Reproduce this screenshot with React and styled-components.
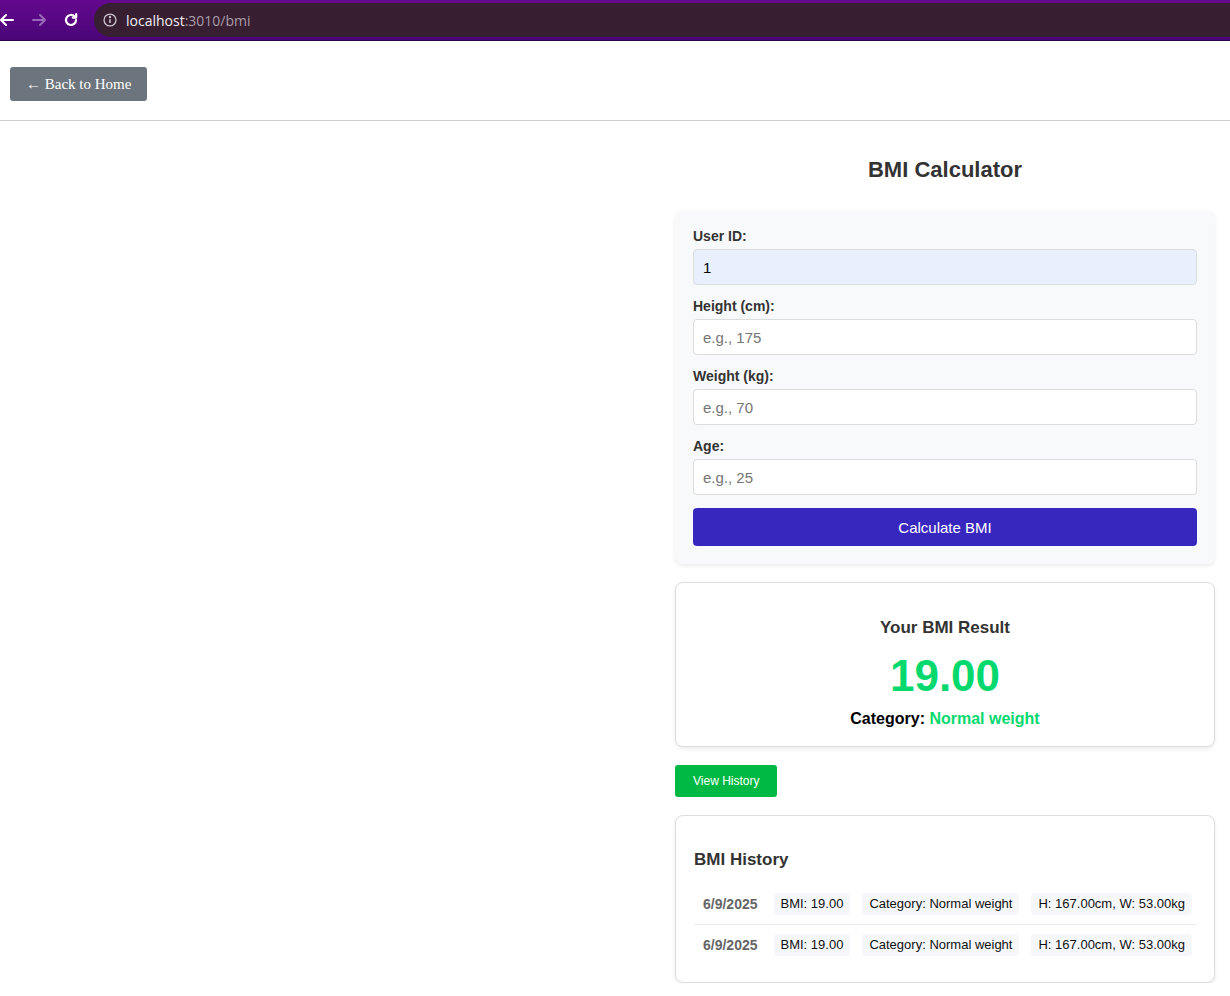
import React, { useState } from "react";
import styled, { createGlobalStyle } from "styled-components";

const GlobalStyle = createGlobalStyle`
  * {
    box-sizing: border-box;
  }
  body {
    margin: 0;
    background: #fff;
    font-family: "Liberation Sans", Arial, sans-serif;
  }
`;

//브라우저 상단 바 (스크린샷에 포함된 부분)
const BrowserBar = styled.div`
  height: 41px;
  display: flex;
  align-items: center;
  gap: 16px;
  background: linear-gradient(to bottom, #64098f, #4a0576);
  border-bottom: 1px solid #2e0248;
`;

const NavIcon = styled.div`
  width: 16px;
  height: 16px;
  display: flex;
  margin-left: ${(p) => (p.$first ? "-1px" : "0")};
`;

const UrlField = styled.div`
  flex: 1;
  height: 34px;
  margin-left: -1px;
  border-radius: 17px 0 0 17px;
  background: #371f31;
  display: flex;
  align-items: center;
  padding-left: 9px;
  gap: 9px;
  font-family: "Open Sans", "DejaVu Sans", sans-serif;
  font-size: 14px;
`;

const Host = styled.span`
  color: #f4eef4;
`;

const UrlRest = styled.span`
  color: #a99ba8;
`;

const Header = styled.div`
  padding: 26px 10px 19px;
  border-bottom: 1px solid #cfcfcf;
`;

const BackButton = styled.button`
  height: 34px;
  padding: 0 16px;
  border: none;
  border-radius: 3px;
  background: #6c757d;
  color: #fff;
  font-family: "Liberation Serif", "Times New Roman", serif;
  font-size: 15px;
  cursor: pointer;
`;

const Layout = styled.div`
  display: grid;
  grid-template-columns: 1fr 540px;
  padding-right: 15px;
`;

const Column = styled.div`
  padding-top: 36px;
`;

const Title = styled.h2`
  margin: 0 0 28px;
  text-align: center;
  font-size: 22px;
  line-height: 25px;
  font-weight: bold;
  color: #333;
`;

const FormCard = styled.form`
  background: #f8f9fa;
  border-radius: 8px;
  padding: 18px 18px 18px;
  box-shadow: 0 2px 4px rgba(0, 0, 0, 0.08);
`;

const Field = styled.div`
  margin-bottom: 13px;
`;

const Label = styled.label`
  display: block;
  font-size: 14px;
  line-height: 17px;
  font-weight: bold;
  color: #333;
  margin-bottom: 4px;
`;

const Input = styled.input`
  display: block;
  width: 100%;
  height: 36px;
  padding: 0 9px;
  border: 1px solid #dcdcdc;
  border-radius: 4px;
  background: ${(p) => (p.$filled ? "#e8f0fe" : "#fff")};
  font-family: "Liberation Sans", Arial, sans-serif;
  font-size: 15px;
  color: #000;
  outline: none;

  &::placeholder {
    color: #757575;
  }
`;

const SubmitButton = styled.button`
  display: block;
  width: 100%;
  height: 38px;
  border: none;
  border-radius: 4px;
  background: #3827be;
  color: #fff;
  font-family: "Liberation Sans", Arial, sans-serif;
  font-size: 15px;
  cursor: pointer;
`;

const Card = styled.div`
  margin-top: 18px;
  background: #fff;
  border: 1px solid #ddd;
  border-radius: 8px;
  box-shadow: 0 2px 4px rgba(0, 0, 0, 0.08);
`;

const ResultCard = styled(Card)`
  padding: 35px 20px 17px;
  text-align: center;
`;

const CardTitle = styled.h3`
  margin: 0;
  font-size: 17px;
  line-height: 20px;
  font-weight: bold;
  color: #333;
`;

const BmiValue = styled.div`
  margin-top: 13px;
  font-size: 44px;
  line-height: 50px;
  font-weight: bold;
  color: #05d96e;
`;

const CategoryLine = styled.div`
  margin-top: 8px;
  font-size: 16px;
  line-height: 20px;
  font-weight: bold;
  color: #000;
`;

const CategoryValue = styled.span`
  color: #05d96e;
`;

const HistoryButton = styled.button`
  display: block;
  margin-top: 18px;
  height: 32px;
  padding: 0 18px;
  border: none;
  border-radius: 3px;
  background: #00b944;
  color: #fff;
  font-family: "Liberation Sans", Arial, sans-serif;
  font-size: 12px;
  cursor: pointer;
`;

const HistoryCard = styled(Card)`
  padding: 34px 18px 17px;

  ${CardTitle} {
    margin-bottom: 14px;
  }
`;

const HistoryRow = styled.div`
  display: flex;
  align-items: center;
  gap: 12px;
  padding: 9px 9px;
  white-space: nowrap;
  border-top: ${(p) => (p.$first ? "none" : "1px solid #ececec")};
`;

const DateText = styled.span`
  margin-right: 4px;
  font-size: 14px;
  font-weight: bold;
  color: #666;
`;

const Chip = styled.span`
  flex-shrink: 0;
  height: 22px;
  line-height: 22px;
  padding: 0 7px;
  border-radius: 4px;
  background: #f6f7f9;
  font-size: 13px;
  color: #111;
`;

const history = [
  { date: "6/9/2025", bmi: "19.00", category: "Normal weight", h: "167.00", w: "53.00" },
  { date: "6/9/2025", bmi: "19.00", category: "Normal weight", h: "167.00", w: "53.00" },
];

const App = () => {
  const [userId, setUserId] = useState("1");
  const [height, setHeight] = useState("");
  const [weight, setWeight] = useState("");
  const [age, setAge] = useState("");

  return (
    <>
      <GlobalStyle />
      <BrowserBar>
        <NavIcon $first>
          <svg width="16" height="16" viewBox="0 0 16 16" fill="none" stroke="#fff" strokeWidth="2" strokeLinecap="round" strokeLinejoin="round">
            <path d="M14 8H2M7 3L2 8l5 5" />
          </svg>
        </NavIcon>
        <NavIcon>
          <svg width="16" height="16" viewBox="0 0 16 16" fill="none" stroke="#9a6ab8" strokeWidth="2" strokeLinecap="round" strokeLinejoin="round">
            <path d="M2 8h12M9 3l5 5-5 5" />
          </svg>
        </NavIcon>
        <NavIcon>
          <svg width="16" height="16" viewBox="0 0 16 16" fill="none" stroke="#fff" strokeWidth="2.2" strokeLinecap="round" strokeLinejoin="round">
            <path d="M13 8a5 5 0 1 1-1.6-3.7" />
            <path d="M13.2 2.2v3.4H9.8" />
          </svg>
        </NavIcon>
        <UrlField>
          <svg width="14" height="14" viewBox="0 0 16 16" fill="none" stroke="#cbc2ca" strokeWidth="1.5">
            <circle cx="8" cy="8" r="6.8" />
            <path d="M8 7v4.5" strokeWidth="1.8" />
            <circle cx="8" cy="4.6" r="0.6" fill="#cbc2ca" />
          </svg>
          <span>
            <Host>localhost</Host>
            <UrlRest>:3010/bmi</UrlRest>
          </span>
        </UrlField>
      </BrowserBar>

      <Header>
        <BackButton>← Back to Home</BackButton>
      </Header>

      <Layout>
        <div />
        <Column>
          <Title>BMI Calculator</Title>

          <FormCard onSubmit={(e) => e.preventDefault()}>
            <Field>
              <Label>User ID:</Label>
              <Input $filled value={userId} onChange={(e) => setUserId(e.target.value)} />
            </Field>
            <Field>
              <Label>Height (cm):</Label>
              <Input placeholder="e.g., 175" value={height} onChange={(e) => setHeight(e.target.value)} />
            </Field>
            <Field>
              <Label>Weight (kg):</Label>
              <Input placeholder="e.g., 70" value={weight} onChange={(e) => setWeight(e.target.value)} />
            </Field>
            <Field>
              <Label>Age:</Label>
              <Input placeholder="e.g., 25" value={age} onChange={(e) => setAge(e.target.value)} />
            </Field>
            <SubmitButton type="submit">Calculate BMI</SubmitButton>
          </FormCard>

          <ResultCard>
            <CardTitle>Your BMI Result</CardTitle>
            <BmiValue>19.00</BmiValue>
            <CategoryLine>
              Category: <CategoryValue>Normal weight</CategoryValue>
            </CategoryLine>
          </ResultCard>

          <HistoryButton>View History</HistoryButton>

          <HistoryCard>
            <CardTitle>BMI History</CardTitle>
            {history.map((item, i) => (
              <HistoryRow key={i} $first={i === 0}>
                <DateText>{item.date}</DateText>
                <Chip>BMI: {item.bmi}</Chip>
                <Chip>Category: {item.category}</Chip>
                <Chip>
                  H: {item.h}cm, W: {item.w}kg
                </Chip>
              </HistoryRow>
            ))}
          </HistoryCard>
        </Column>
      </Layout>
    </>
  );
};

export default App;
